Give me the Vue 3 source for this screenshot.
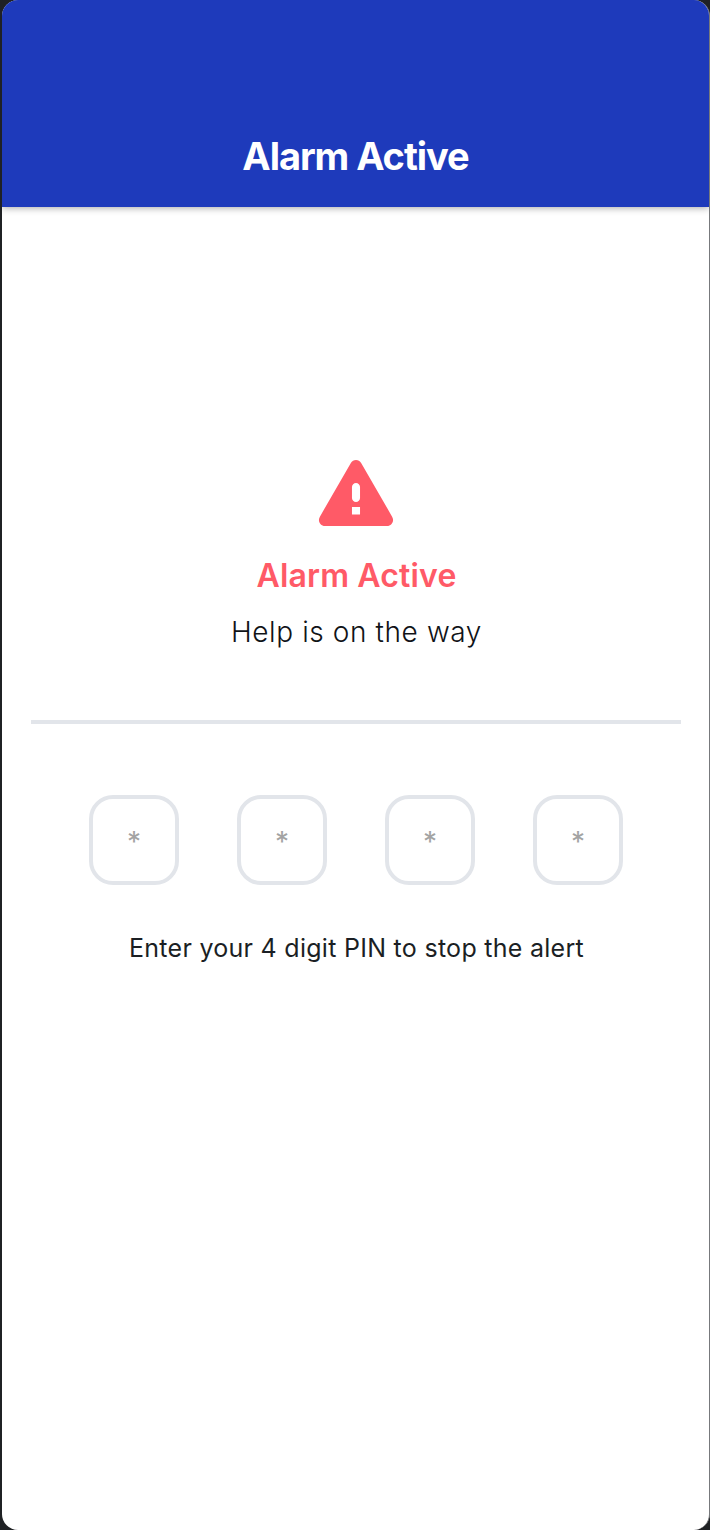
<script setup>
const digits = ["*", "*", "*", "*"];
</script>

<template>
  <div class="screen">
    <header class="top-bar">
      <h1>Alarm Active</h1>
    </header>

    <main class="content">
      <section class="status">
        <svg class="warn-icon" viewBox="0 0 24 24" width="88" height="88">
          <path
            fill="#ff5a67"
            fill-rule="evenodd"
            d="M12 2.45c.6 0 1.100.3 1.400.8L21.850 17.900c.7 1.150-.1 2.550-1.400 2.550H3.550c-1.300 0-2.100-1.400-1.400-2.550L10.600 3.250c.3-.5.8-.8 1.400-.8zM12 8.700c.6 0 1.100.5 1.100 1.100v3c0 .6-.5 1.100-1.100 1.100s-1.100-.5-1.100-1.100v-3c0-.6.5-1.100 1.100-1.100zM10.900 15.300h2.200v2h-2.200z"
          />
        </svg>
        <h2>Alarm Active</h2>
        <p class="help">Help is on the way</p>
      </section>

      <hr class="divider" />

      <div class="pin-row">
        <div v-for="(d, i) in digits" :key="i" class="pin-box">{{ d }}</div>
      </div>

      <p class="hint">Enter your 4 digit PIN to stop the alert</p>
    </main>
  </div>
</template>

<style>
html,
body {
  margin: 0;
  background: #1f2124;
}
</style>

<style scoped>
.screen {
  box-sizing: border-box;
  width: 708px;
  height: 1530px;
  margin-left: 2px;
  background: #fff;
  border-right: 1px solid #77797c;
  border-radius: 16px;
  overflow: hidden;
  font-family: Inter, "Liberation Sans", sans-serif;
}

.top-bar {
  box-sizing: border-box;
  height: 207px;
  padding-bottom: 29px;
  display: flex;
  align-items: flex-end;
  justify-content: center;
  background: #1e3abb;
  box-shadow: 0 1px 7px rgba(0, 0, 0, 0.35);
}

.top-bar h1 {
  margin: 0;
  color: #fff;
  font-size: 38px;
  line-height: 44px;
  font-weight: 700;
  letter-spacing: -1.05px;
}

.content {
  padding: 0 28px 0 29px;
}

.status {
  padding: 244px 0 0 1px;
  display: flex;
  flex-direction: column;
  align-items: center;
}

.warn-icon {
  display: block;
  margin-left: -2px;
}

.status h2 {
  margin: 17px 0 0;
  color: #ff5a67;
  font-size: 32px;
  line-height: 40px;
  font-weight: 600;
  letter-spacing: 0.15px;
}

.help {
  margin: 19px 0 0;
  color: #101317;
  font-size: 28px;
  line-height: 34px;
  font-weight: 300;
  letter-spacing: 0.6px;
}

.divider {
  margin: 71px 0 0;
  border: none;
  height: 4px;
  background: #e2e5ea;
}

.pin-row {
  margin-top: 71px;
  display: flex;
  justify-content: center;
  gap: 58px;
}

.pin-box {
  box-sizing: border-box;
  width: 90px;
  height: 90px;
  padding-top: 4px;
  border: 4px solid #e2e5ea;
  border-radius: 24px;
  display: flex;
  align-items: center;
  justify-content: center;
  color: #a3a3a3;
  font-size: 28px;
}

.hint {
  margin: 47px 0 0;
  padding-left: 1px;
  text-align: center;
  color: #1b1f24;
  font-size: 25px;
  line-height: 32px;
  letter-spacing: 0.28px;
}
</style>
